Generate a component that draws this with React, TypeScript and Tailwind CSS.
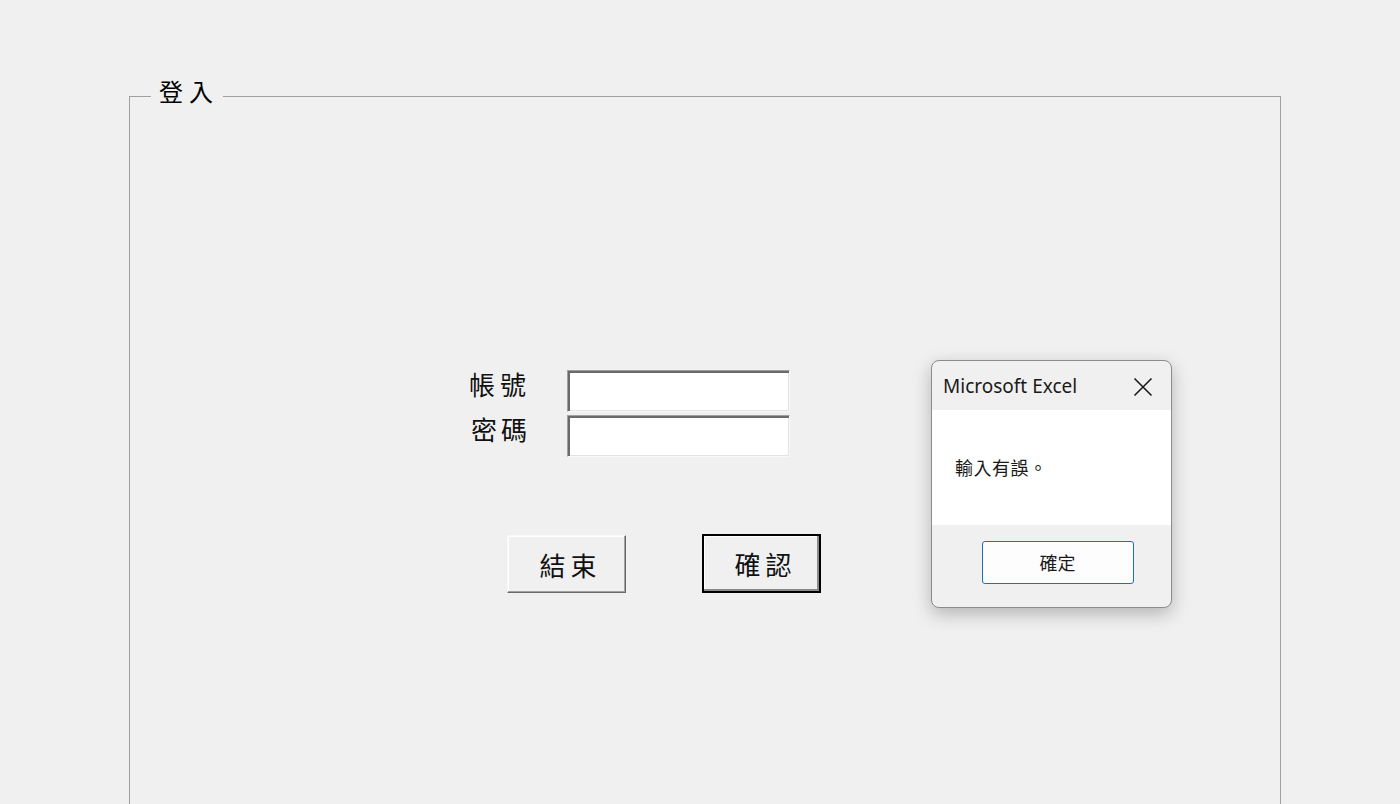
import React from "react";

const cjk = { fontFamily: '"Noto Sans CJK TC", "Noto Sans CJK SC", sans-serif' };

export default function App() {
  return (
    <div className="relative w-[1400px] h-[804px] overflow-hidden bg-[#f0f0f0]" style={cjk}>
      <div className="pl-[129px] pt-[78px] w-[1281px]">
        <fieldset className="border border-[#a0a0a0] h-[760px] px-0">
          <legend className="ml-[21px] pl-[8px] pr-[4px] pb-[10px] text-[24px] leading-[26px] text-black tracking-[6px]">登入</legend>
          <div className="pt-[256px] pl-[339px]">
            <div className="grid grid-cols-[98px_223px] gap-y-[3px]">
              <div className="text-[26px] leading-[42px] -mt-[7px] tracking-[5px] text-[#111]">帳號</div>
              <div className="h-[42px] bg-white border border-t-[#a0a0a0] border-l-[#a0a0a0] border-b-[#f8f8f8] border-r-[#f8f8f8] shadow-[inset_2px_2px_0_#6a6a6a,inset_-1px_-1px_0_#e3e3e3]" />
              <div className="text-[26px] leading-[42px] -mt-[7px] pl-[2px] tracking-[4px] text-[#111]">密碼</div>
              <div className="h-[42px] bg-white border border-t-[#a0a0a0] border-l-[#a0a0a0] border-b-[#f8f8f8] border-r-[#f8f8f8] shadow-[inset_2px_2px_0_#6a6a6a,inset_-1px_-1px_0_#e3e3e3]" />
            </div>
            <div className="flex mt-[77px] pl-[38px] gap-[76px] items-end">
              <button className="w-[119px] h-[58px] bg-[#f0f0f0] border border-t-[#f8f8f8] border-l-[#f8f8f8] border-b-[#696969] border-r-[#696969] shadow-[inset_-1px_-1px_0_#a0a0a0,inset_1px_1px_0_#ffffff] text-[26px] tracking-[5px] text-[#111] pl-[8px]">
                結束
              </button>
              <button className="w-[119px] h-[59px] bg-[#f0f0f0] border-2 border-black shadow-[inset_-2px_-2px_0_#8a8a8a,inset_1px_1px_0_#ffffff] text-[26px] tracking-[5px] text-[#111] pl-[8px]">
                確認
              </button>
            </div>
          </div>
        </fieldset>
      </div>

      <div className="absolute left-[931px] top-[360px] w-[241px] h-[248px] rounded-[8px] border border-[#8c8c8c] bg-[#f0f0f0] shadow-[0_6px_18px_rgba(0,0,0,0.25)] overflow-hidden flex flex-col">
        <div className="h-[49px] flex items-center justify-between pl-[11px] pr-[18px]">
          <span className="text-[19px] text-[#1a1a1a] pt-[2px]" style={{ fontFamily: '"Noto Sans", "Open Sans", sans-serif' }}>Microsoft Excel</span>
          <svg width="20" height="20" viewBox="0 0 20 20" className="mt-[2px]">
            <path d="M1.5 1.5 L18.5 18.5 M18.5 1.5 L1.5 18.5" stroke="#1a1a1a" strokeWidth="1.6" fill="none" />
          </svg>
        </div>
        <div className="h-[115px] bg-white flex items-center pl-[23px]">
          <span className="text-[18px] text-[#1a1a1a] tracking-[0.5px]">輸入有誤。</span>
        </div>
        <div className="flex-1 flex justify-center pt-[16px] pl-[12px]">
          <button className="w-[152px] h-[43px] bg-[#fdfdfd] border border-[#1c6fbf] rounded-[3px] text-[18px] text-[#1a1a1a]">
            確定
          </button>
        </div>
      </div>
    </div>
  );
}
